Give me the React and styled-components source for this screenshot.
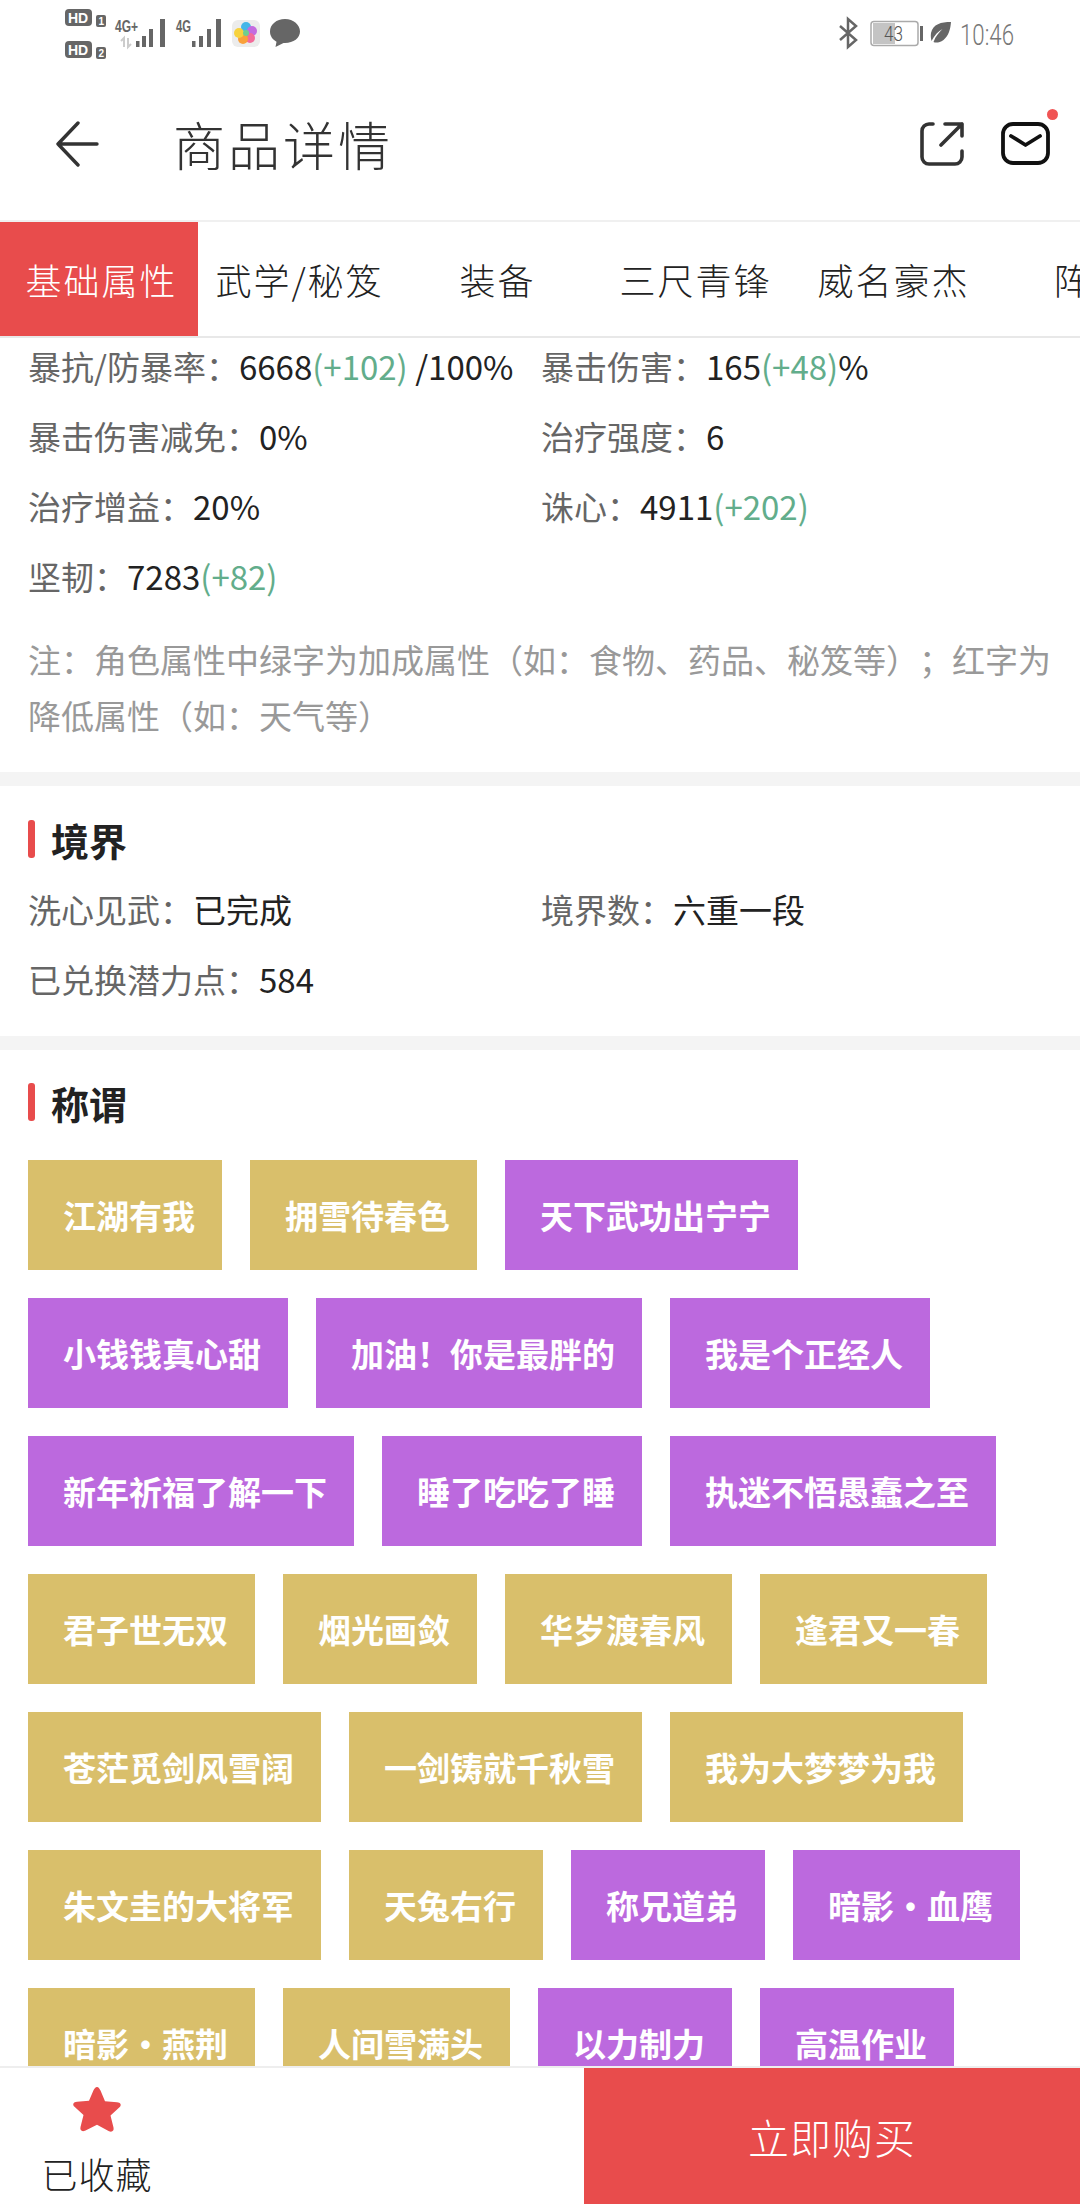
import React from 'react';
import styled, { createGlobalStyle } from 'styled-components';

const GlobalStyle = createGlobalStyle`
  html, body {
    margin: 0;
    padding: 0;
    background: #fff;
  }
  * {
    box-sizing: border-box;
  }
`;

const Page = styled.div`
  width: 1080px;
  height: 2204px;
  display: flex;
  flex-direction: column;
  overflow: hidden;
  background: #fff;
  font-family: "Noto Sans CJK SC", "Noto Sans", sans-serif;
`;

const StatusBar = styled.div`
  height: 64px;
  flex: none;
  display: flex;
  align-items: flex-start;
  justify-content: space-between;
  padding: 0 60px 0 60px;
`;

const Header = styled.div`
  height: 156px;
  flex: none;
  display: flex;
  align-items: center;
  padding: 3px 30px 0 55px;
`;

const Title = styled.div`
  font-size: 52px;
  font-weight: 300;
  color: #333;
  margin-left: 74px;
  letter-spacing: 3px;
  flex: 1;
`;

const HeaderIcons = styled.div`
  display: flex;
  align-items: center;
  gap: 37px;
`;

const MailWrap = styled.div`
  position: relative;
  height: 43px;
`;

const Dot = styled.span`
  position: absolute;
  top: -13px;
  right: -8px;
  width: 11px;
  height: 11px;
  border-radius: 50%;
  background: #f05454;
`;

const Tabs = styled.div`
  height: 118px;
  flex: none;
  display: flex;
  overflow: hidden;
  border-top: 2px solid #f0f0f0;
  border-bottom: 2px solid #e8e8e8;
`;

const Tab = styled.div`
  flex: none;
  width: 198px;
  padding-left: 5px;
  display: flex;
  align-items: center;
  justify-content: center;
  font-size: 36px;
  font-weight: 300;
  letter-spacing: 2px;
  white-space: nowrap;
  color: ${(p) => (p.$active ? '#fff' : '#222')};
  background: ${(p) => (p.$active ? '#e84c4c' : 'transparent')};
`;

const Content = styled.div`
  flex: 1;
  min-height: 0;
  overflow: hidden;
`;

const Section = styled.div`
  margin-top: ${(p) => p.$scroll || 0}px;
  padding: ${(p) => p.$top}px 28px ${(p) => p.$bottom}px;
  border-bottom: 14px solid #f4f4f4;

  &:last-child {
    border-bottom: none;
    padding-right: 40px;
  }
`;

const StatGrid = styled.div`
  display: grid;
  grid-template-columns: 513px 1fr;
  grid-auto-rows: 70px;
`;

const Stat = styled.div`
  font-size: 33px;
  line-height: 70px;
  white-space: nowrap;
  color: #666;
`;

const Value = styled.span`
  color: #222;
`;

const Bonus = styled.span`
  color: #62ad8b;
`;

const Note = styled.div`
  margin-top: 20px;
  font-size: 33px;
  line-height: 56px;
  text-spacing-trim: space-all;
  color: #999;
`;

const SectionTitle = styled.div`
  display: flex;
  align-items: center;
  height: 44px;
  margin-bottom: 13px;
  font-size: 38px;
  font-weight: 700;
  color: #222;

  &::before {
    content: '';
    width: 7px;
    height: 38px;
    border-radius: 3px;
    margin-right: 16px;
    background: #e84c4c;
  }
`;

const TagList = styled.div`
  display: flex;
  flex-wrap: wrap;
  gap: 28px;
  margin-top: 36px;
`;

const Tag = styled.div`
  height: 110px;
  padding: 0 27px 0 35px;
  display: flex;
  align-items: center;
  font-size: 33px;
  font-weight: 700;
  color: #fff;
  white-space: nowrap;
  background: ${(p) => (p.$kind === 'gold' ? '#d9bf6b' : '#bc69de')};
`;

const Footer = styled.div`
  height: 138px;
  flex: none;
  display: flex;
  border-top: 2px solid #eee;
`;

const Favorite = styled.div`
  width: 584px;
  display: flex;
  flex-direction: column;
  align-items: center;
  padding: 18px 432px 0 42px;
`;

const FavoriteLabel = styled.div`
  font-size: 36px;
  font-weight: 300;
  line-height: 50px;
  letter-spacing: 1px;
  white-space: nowrap;
  color: #222;
  margin-top: 14px;
`;

const BuyButton = styled.div`
  flex: 1;
  display: flex;
  align-items: center;
  justify-content: center;
  font-size: 41px;
  font-weight: 300;
  letter-spacing: 1px;
  color: #fff;
  background: #e84c4c;
`;

const StatusLabel = styled.text`
  font-family: "Liberation Sans", sans-serif;
  font-weight: 700;
  font-size: ${(p) => p.$size}px;
  fill: ${(p) => p.$fill};
`;

const ThinLabel = styled.text`
  font-family: Roboto, sans-serif;
  font-weight: 300;
  font-size: ${(p) => p.$size}px;
  fill: ${(p) => p.$fill};
`;

// status bar drawings use page coordinates in their viewBox
const StatusLeft = () => (
  <svg width="250" height="64" viewBox="60 0 250 64">
    <g fill="#666">
      <rect x="65" y="9" width="27" height="17" rx="4" />
      <rect x="96" y="15" width="10" height="12" rx="2" />
      <rect x="65" y="41" width="27" height="17" rx="4" />
      <rect x="96" y="47" width="10" height="12" rx="2" />
      <rect x="136" y="41" width="3.500" height="6" />
      <rect x="142" y="36" width="4" height="11" />
      <rect x="149" y="29" width="4" height="18" />
      <rect x="160" y="19" width="5" height="28" />
      <rect x="192" y="41" width="3.500" height="6" />
      <rect x="199" y="36" width="4" height="11" />
      <rect x="207" y="29" width="4" height="18" />
      <rect x="216" y="19" width="5" height="28" />
    </g>
    <StatusLabel x="68" y="23" $size={14} $fill="#fff">HD</StatusLabel>
    <StatusLabel x="68" y="55" $size={14} $fill="#fff">HD</StatusLabel>
    <StatusLabel x="98.500" y="25" $size={10} $fill="#fff">1</StatusLabel>
    <StatusLabel x="98.500" y="57" $size={10} $fill="#fff">2</StatusLabel>
    <StatusLabel x="115" y="32" $size={16} $fill="#666" textLength="23" lengthAdjust="spacingAndGlyphs">4G+</StatusLabel>
    <StatusLabel x="176" y="32" $size={16} $fill="#666" textLength="15" lengthAdjust="spacingAndGlyphs">4G</StatusLabel>
    <path d="M124 47V38l-3 3M128 38v9l3-3" fill="none" stroke="#ccc" strokeWidth="2" />
    <rect x="232" y="20" width="28" height="27" rx="6" fill="#ececec" />
    <circle cx="246" cy="27" r="5" fill="#45b6e8" />
    <circle cx="252" cy="31" r="5" fill="#c36be0" />
    <circle cx="250" cy="38" r="5" fill="#f36b9a" />
    <circle cx="243" cy="39" r="5" fill="#f9a13a" />
    <circle cx="239" cy="33" r="5" fill="#f7d23e" />
    <circle cx="246" cy="33" r="3" fill="#6fce8f" />
    <path d="M285 19c-8.500 0-15 5.500-15 12.500 0 4.500 2.500 8 6.500 10.200L275.500 47l8-4h1.500c8.500 0 15-5 15-11.500S293.500 19 285 19z" fill="#666" />
  </svg>
);

const StatusRight = () => (
  <svg width="185" height="64" viewBox="835 0 185 64">
    <path d="M840 26l16 14-8 7V19l8 7-16 14" fill="none" stroke="#666" strokeWidth="2.500" />
    <rect x="871" y="21.500" width="47" height="24" rx="3" fill="#fff" stroke="#aaa" strokeWidth="1.500" />
    <rect x="873" y="23" width="22" height="21" fill="#c4c4c4" />
    <rect x="920" y="26" width="3" height="15" fill="#666" />
    <ThinLabel x="884" y="41" $size={20} $fill="#555" textLength="19" lengthAdjust="spacingAndGlyphs">43</ThinLabel>
    <path d="M951 22c-10 0-18 2-20 11-.5 3 0 6 .5 8 3-6 7-10 11-12-3 3-7 7-9 13 2 1 6 1 10-2 5-4 7-11 7.500-18z" fill="#666" />
    <ThinLabel x="960" y="45" $size={30} $fill="#777" textLength="54" lengthAdjust="spacingAndGlyphs">10:46</ThinLabel>
  </svg>
);

const BackIcon = () => (
  <svg width="44" height="46" viewBox="0 0 44 46" fill="none" stroke="#333" strokeWidth="3.400" strokeLinecap="round" strokeLinejoin="round">
    <path d="M42 23H3M23 2L3 23l20 21" />
  </svg>
);

const ShareIcon = () => (
  <svg width="44" height="44" viewBox="0 0 44 44" fill="none" stroke="#333" strokeWidth="3.600" strokeLinecap="round" strokeLinejoin="round">
    <path d="M13 2H9a7 7 0 0 0-7 7v26a7 7 0 0 0 7 7h26a7 7 0 0 0 7-7v-6" />
    <path d="M25 2h17v12M42 2L21 23" />
  </svg>
);

const MailIcon = () => (
  <svg width="49" height="43" viewBox="0 0 49 43" fill="none" stroke="#111" strokeWidth="3.800" strokeLinecap="round" strokeLinejoin="round">
    <rect x="2" y="2" width="45" height="39" rx="10" />
    <path d="M10 14l14.500 9L39 14" />
  </svg>
);

const StarIcon = () => (
  <svg width="52" height="48" viewBox="0 0 52 52" preserveAspectRatio="none">
    <path d="M26 1c1.500 0 2.500 1.500 3.500 4l4.500 11.500 12 1c3.500.3 5 3 2.500 5.500l-9 9 3 13c.8 3.500-1.500 5.500-4.500 4L26 42l-12 6.500c-3 1.500-5.300-.5-4.500-4l3-13-9-9C1 20 2.500 17.300 6 17l12-1 4.500-11.500C23.500 2.500 24.500 1 26 1z" fill="#e84c4c" />
  </svg>
);

const tabs = ['基础属性', '武学/秘笈', '装备', '三尺青锋', '威名豪杰', '阵法'];

const tags = [
  ['江湖有我', 'gold'], ['拥雪待春色', 'gold'], ['天下武功出宁宁', 'purple'],
  ['小钱钱真心甜', 'purple'], ['加油\uFF01你是最胖的', 'purple'], ['我是个正经人', 'purple'],
  ['新年祈福了解一下', 'purple'], ['睡了吃吃了睡', 'purple'], ['执迷不悟愚蠢之至', 'purple'],
  ['君子世无双', 'gold'], ['烟光画敛', 'gold'], ['华岁渡春风', 'gold'], ['逢君又一春', 'gold'],
  ['苍茫觅剑风雪阔', 'gold'], ['一剑铸就千秋雪', 'gold'], ['我为大梦梦为我', 'gold'],
  ['朱文圭的大将军', 'gold'], ['天兔右行', 'gold'], ['称兄道弟', 'purple'], ['暗影·血鹰', 'purple'],
  ['暗影·燕荆', 'gold'], ['人间雪满头', 'gold'], ['以力制力', 'purple'], ['高温作业', 'purple'],
];

const COLON = '\uFF1A';
const NOTE = `注${COLON}角色属性中绿字为加成属性\uFF08如${COLON}食物、药品、秘笈等\uFF09\uFF1B红字为降低属性\uFF08如${COLON}天气等\uFF09`;

function App() {
  return (
    <Page>
      <GlobalStyle />
      <StatusBar>
        <StatusLeft />
        <StatusRight />
      </StatusBar>

      <Header>
        <BackIcon />
        <Title>商品详情</Title>
        <HeaderIcons>
          <ShareIcon />
          <MailWrap>
            <MailIcon />
            <Dot />
          </MailWrap>
        </HeaderIcons>
      </Header>

      <Tabs>
        {tabs.map((label, i) => (
          <Tab key={label} $active={i === 0}>{label}</Tab>
        ))}
      </Tabs>

      <Content>
        <Section $scroll={-7} $top={0} $bottom={29}>
          <StatGrid>
            <Stat>暴抗/防暴率{COLON}<Value>6668</Value><Bonus>(+102)</Bonus><Value> /100%</Value></Stat>
            <Stat>暴击伤害{COLON}<Value>165</Value><Bonus>(+48)</Bonus><Value>%</Value></Stat>
            <Stat>暴击伤害减免{COLON}<Value>0%</Value></Stat>
            <Stat>治疗强度{COLON}<Value>6</Value></Stat>
            <Stat>治疗增益{COLON}<Value>20%</Value></Stat>
            <Stat>诛心{COLON}<Value>4911</Value><Bonus>(+202)</Bonus></Stat>
            <Stat>坚韧{COLON}<Value>7283</Value><Bonus>(+82)</Bonus></Stat>
          </StatGrid>
          <Note>{NOTE}</Note>
        </Section>

        <Section $top={31} $bottom={22}>
          <SectionTitle>境界</SectionTitle>
          <StatGrid>
            <Stat>洗心见武{COLON}<Value>已完成</Value></Stat>
            <Stat>境界数{COLON}<Value>六重一段</Value></Stat>
            <Stat>已兑换潜力点{COLON}<Value>584</Value></Stat>
          </StatGrid>
        </Section>

        <Section $top={30} $bottom={0}>
          <SectionTitle>称谓</SectionTitle>
          <TagList>
            {tags.map(([label, kind]) => (
              <Tag key={label} $kind={kind}>{label}</Tag>
            ))}
          </TagList>
        </Section>
      </Content>

      <Footer>
        <Favorite>
          <StarIcon />
          <FavoriteLabel>已收藏</FavoriteLabel>
        </Favorite>
        <BuyButton>立即购买</BuyButton>
      </Footer>
    </Page>
  );
}

export default App;
